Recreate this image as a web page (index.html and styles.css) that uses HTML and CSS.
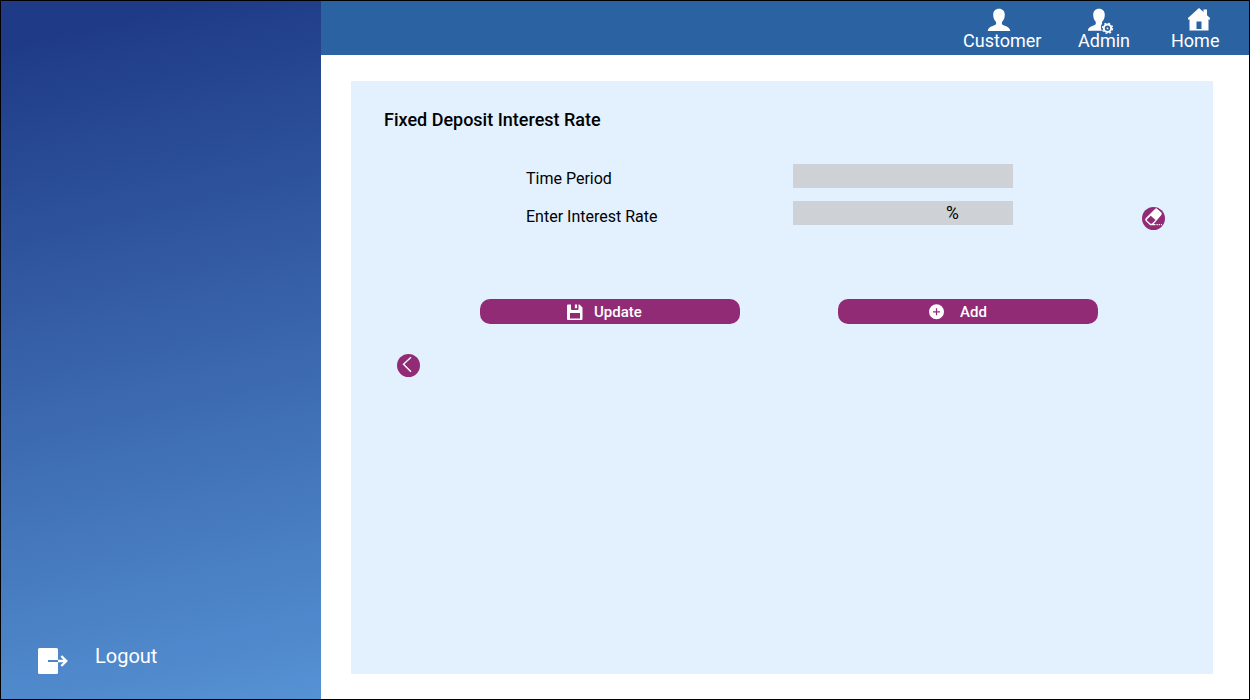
FILE: index.html
```html
<!DOCTYPE html>
<html lang="en">
<head>
<meta charset="utf-8">
<title>Fixed Deposit Interest Rate</title>
<link rel="stylesheet" href="styles.css">
</head>
<body>
<div class="app">
  <aside class="sidebar">
    <a class="logout">
      <svg class="logout-icon" width="30" height="26" viewBox="0 0 30 26"><rect width="20" height="26" rx="1.5" fill="#fff"/><path d="M10 13H20" stroke="#4d86c8" stroke-width="2"/><path d="M20 13H28M23.300 8l5 5-5 5" fill="none" stroke="#fff" stroke-width="2.300"/></svg>
      <span class="logout-text">Logout</span>
    </a>
  </aside>
  <div class="content">
    <header class="topbar">
      <a class="nav customer">
        <svg width="24" height="24" viewBox="0 0 24 24"><path d="M12 .8c3.700 0 5.800 2.500 5.800 6 0 2.900-1 5.200-2.500 6.700-.6.600-.6 2.800.3 3.300 2.600 1.500 7.200 2 7.700 6.200H.7c.5-4.200 5.100-4.700 7.700-6.200.9-.5.9-2.700.3-3.300C7.200 12 6.200 9.700 6.200 6.800c0-3.500 2.100-6 5.800-6z" fill="#fff"/></svg>
        <span>Customer</span>
      </a>
      <a class="nav admin">
        <svg width="28" height="26" viewBox="0 0 28 26"><path d="M12 .8c3.700 0 5.800 2.500 5.800 6 0 2.900-1 5.200-2.500 6.700-.4.500-.4 1.400-.2 2.200-1 1.200-1.400 2.900-1.100 4.400.2 1.100.5 2 .9 2.700H.9c.3-4.200 4.500-4.500 7.200-6 .9-.5.900-2.700.4-3.300C7.200 12 6.200 9.700 6.200 6.800c0-3.500 2.100-6 5.800-6z" fill="#fff"/><circle cx="20.500" cy="20.300" r="3.700" fill="none" stroke="#fff" stroke-width="2"/><circle cx="20.500" cy="20.300" r="5.100" fill="none" stroke="#fff" stroke-width="1.200" stroke-dasharray="2 2.006"/><circle cx="20.500" cy="20.300" r=".9" fill="#fff"/></svg>
        <span>Admin</span>
      </a>
      <a class="nav home">
        <svg width="24" height="24" viewBox="0 0 24 24"><path fill-rule="evenodd" d="M12 0l4.500 4V1.500h3.500v5.700L23 10v1.500h-1.500V22.500h-19V11.500H1V10zM9.500 13.500v7.500h5v-7.500z" fill="#fff"/></svg>
        <span>Home</span>
      </a>
    </header>
    <main class="panel">
      <h1 class="title">Fixed Deposit Interest Rate</h1>
      <form class="form">
        <div class="row"><span class="label">Time Period</span><div class="field"></div></div>
        <div class="row"><span class="label rate-label">Enter Interest Rate</span><div class="field"><span class="unit">%</span></div>
          <a class="round clear"><svg width="23" height="23" viewBox="0 0 23 23"><path d="M3.700 11.300L13 1.900q1.200-1.100 2.400 0l3.900 3.700q1.100 1.200 0 2.400L11.700 17H13.500v1.200H8.200l-4.500-4.300q-1.200-1.300 0-2.600z" fill="#fff"/><path d="M4.900 12.600L8.700 8.700l4.900 4.400-3.700 3.700H8.700L4.900 13.500z" fill="#922b75"/><path d="M14.500 17.600h1.300m.9 0h1.300m.9 0h1.100" stroke="#fff" stroke-width="1.200"/></svg></a>
        </div>
      </form>
      <div class="actions">
        <a class="button update"><svg width="16" height="16" viewBox="0 0 16 16"><path fill-rule="evenodd" d="M1 .5h3V5q0 1 1 1h5.500q1 0 1-1V.5h1l3 3V15q0 1-1 1H1q-1 0-1-1V1.500q0-1 1-1zM3 9v5.500h10V9zM7.900.5h2.200v3.700H7.900z" fill="#fff"/></svg><span>Update</span></a>
        <a class="button add"><svg width="16" height="16" viewBox="0 0 16 16"><circle cx="8.500" cy="7.800" r="7.500" fill="#fff"/><path d="M8.500 4.300v7M5 7.800h7" stroke="#922b75" stroke-width="1.200"/></svg><span>Add</span></a>
      </div>
      <a class="round back"><svg width="23" height="23" viewBox="0 0 23 23"><path d="M14 3.200L6.500 10.200l7.500 7.500" fill="none" stroke="#fff" stroke-width="1.400"/></svg></a>
    </main>
  </div>
</div>
</body>
</html>
```
FILE: styles.css
```css
* { box-sizing: border-box; }
body { margin: 0; font-family: Roboto, sans-serif; color: #000; }
svg { display: block; flex: none; }
.app { display: flex; width: 1250px; height: 700px; border: 1px solid #000; background: #fff; }
.sidebar { display: flex; align-items: flex-end; width: 320px; padding: 0 0 25px 37px; background: linear-gradient(167deg, #1f3b87 6%, #5592d4 100%); }
.logout { display: flex; gap: 27px; color: #fff; }
.logout-text { margin-top: -4px; font-size: 20px; line-height: 24px; }
.content { flex: 1; }
.topbar { display: flex; justify-content: flex-end; height: 54px; padding: 7px 30px 0 0; background: #2b63a2; color: #fff; font-size: 18px; line-height: 21px; }
.nav { display: flex; flex-direction: column; height: 43px; }
.nav span { margin-top: auto; }
.nav svg { margin-bottom: -3px; }
.customer { width: 78px; margin-right: 37px; }
.customer svg { margin-left: 24px; }
.admin { width: 52px; margin-right: 41px; }
.admin svg { margin-left: 9px; margin-bottom: -5px; }
.home { width: 48px; }
.home svg { margin-left: 16px; }
.panel { width: 862px; height: 593px; margin: 26px 0 0 30px; padding: 28px 0 0 33px; background: #e3f1ff; }
.title { margin: 0; font-size: 18px; font-weight: 500; line-height: 21px; }
.form { display: flex; flex-direction: column; gap: 13px; margin-top: 34px; padding-left: 142px; }
.row { display: flex; height: 24px; }
.label { width: 267px; padding-top: 5px; font-size: 16px; line-height: 19px; }
.rate-label { padding-top: 6px; }
.field { width: 220px; height: 24px; padding: 2px 0 0 153px; background: #ced1d6; }
.unit { font-size: 17.500px; line-height: 20px; }
.round { display: block; width: 23px; height: 23px; border-radius: 50%; background: #922b75; }
.clear { margin: 6px 0 0 129px; }
.actions { display: flex; gap: 98px; margin: 74px 0 0 96px; }
.button { display: flex; align-items: center; width: 260px; height: 25px; border-radius: 10px; background: #922b75; color: #fff; font-size: 15px; font-weight: 500; line-height: 18px; }
.update { padding-left: 87px; gap: 11px; }
.add { padding-left: 90px; gap: 16px; }
.back { margin: 30px 0 0 13px; }
```
